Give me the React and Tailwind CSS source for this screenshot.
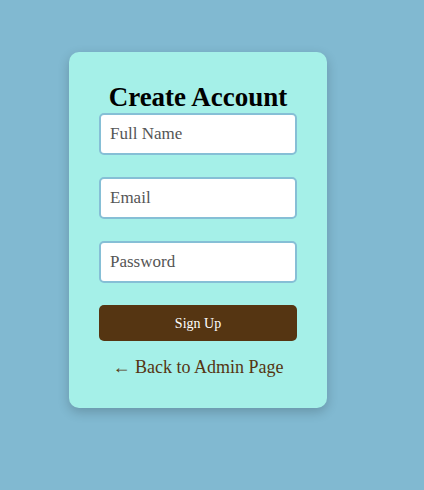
import React from "react";

export default function App() {
  const serif = { fontFamily: '"Liberation Serif", "DejaVu Serif", serif' };
  return (
    <div className="min-h-[490px] w-full bg-[#81b9d1] pt-[52px] pl-[69px]" style={serif}>
      <div className="w-[258px] rounded-[10px] bg-[#a5f0e8] px-[30px] pt-[30px] pb-[30px] shadow-[0_4px_12px_rgba(0,0,0,0.2)]">
        <h2 className="mb-[1px] text-center text-[27px] font-bold leading-[30px] text-black">Create Account</h2>
        <div className="flex flex-col gap-[22px]">
          <input
            type="text"
            placeholder="Full Name"
            className="h-[42px] w-full rounded-[5px] border-2 border-[#86bfd6] bg-white px-[9px] text-[17px] text-[#333] placeholder:text-[#555] outline-none"
          />
          <input
            type="email"
            placeholder="Email"
            className="h-[42px] w-full rounded-[5px] border-2 border-[#86bfd6] bg-white px-[9px] text-[17px] text-[#333] placeholder:text-[#555] outline-none"
          />
          <input
            type="password"
            placeholder="Password"
            className="h-[42px] w-full rounded-[5px] border-2 border-[#86bfd6] bg-white px-[9px] text-[17px] text-[#333] placeholder:text-[#555] outline-none"
          />
          <button className="h-[36px] w-full rounded-[5px] bg-[#553512] text-[14px] text-white">Sign Up</button>
        </div>
        <div className="mt-[15px] text-center text-[18px] leading-[22px] text-[#553512]">← Back to Admin Page</div>
      </div>
    </div>
  );
}
